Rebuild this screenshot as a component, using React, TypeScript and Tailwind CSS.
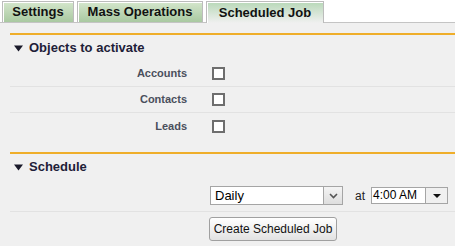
import { useState } from 'react'

const tabs = [
  { label: 'Settings', w: 'w-[72px]' },
  { label: 'Mass Operations', w: 'w-[126px]' },
  { label: 'Scheduled Job', w: 'w-[118px]' },
]
const objects = ['Accounts', 'Contacts', 'Leads']

function Caret() {
  return (
    <svg width="9" height="7" viewBox="0 0 9 7" className="shrink-0">
      <path d="M0 0.5 H9 L4.5 6.5 Z" fill="#1a1a2a" />
    </svg>
  )
}

function SectionHeader({ title }: { title: string }) {
  return (
    <div className="ml-[10px] border-t-2 border-[#efae2a]">
      <div className="flex items-center gap-[6px] pl-[4px] h-[26px] text-[13px] font-bold text-[#1e2038]">
        <Caret />
        <span>{title}</span>
      </div>
    </div>
  )
}

export default function App() {
  const [checked, setChecked] = useState<Record<string, boolean>>({})

  return (
    <div className="w-[455px] h-[246px] bg-white font-['Liberation_Sans',Arial,sans-serif] overflow-hidden">
      {/* tab strip */}
      <div className="flex items-end h-[23px] border-b border-[#c4c4c4] pl-[2px] gap-[3px]">
        {tabs.map((t, i) => {
          const active = i === 2
          return (
            <div
              key={t.label}
              className={`${t.w} h-[21px] flex items-center justify-center text-[13px] font-bold text-[#111] border border-[#bcbcbc] border-b-0 shadow-[inset_1px_1px_0_#ffffff] ${
                active
                  ? 'bg-gradient-to-b from-[#b8d8b8] to-[#f0f0f0] h-[22px] -mb-px'
                  : 'bg-gradient-to-b from-[#d4e6cc] to-[#a9c9a1]'
              }`}
            >
              {t.label}
            </div>
          )
        })}
      </div>

      <div className="bg-[#f0f0f0] h-[223px] pt-[10px]">
        <SectionHeader title="Objects to activate" />
        <div className="ml-[10px]">
          {objects.map((o, i) => (
            <div
              key={o}
              className={`flex items-center h-[26px] ${i < objects.length - 1 ? 'border-b border-[#e2e2e2]' : ''}`}
            >
              <div className="w-[177px] text-right text-[11px] font-bold text-[#4a4f5c]">{o}</div>
              <label className="ml-[25px] w-[13px] h-[13px] border-2 border-[#6e6e6e] bg-white cursor-pointer">
                <input
                  type="checkbox"
                  className="hidden"
                  checked={!!checked[o]}
                  onChange={() => setChecked({ ...checked, [o]: !checked[o] })}
                />
              </label>
            </div>
          ))}
        </div>

        <div className="h-[13px]" />
        <SectionHeader title="Schedule" />
        <div className="ml-[10px]">
          <div className="flex items-center h-[32px] border-b border-[#e2e2e2] pl-[200px]">
            <div className="flex w-[133px] h-[19px] border border-[#a5a5a5] bg-white">
              <span className="flex-1 text-[13px] leading-[17px] pl-[4px] text-black">Daily</span>
              <span className="w-[19px] h-full flex items-center justify-center bg-gradient-to-b from-[#f4f4f4] to-[#dedede] border-l border-[#a5a5a5]">
                <svg width="9" height="6" viewBox="0 0 9 6">
                  <path d="M1 1 L4.5 4.5 L8 1" fill="none" stroke="#555" strokeWidth="1.6" />
                </svg>
              </span>
            </div>
            <span className="ml-[12px] text-[12px] text-[#222]">at</span>
            <div className="ml-[6px] flex w-[77px] h-[17px] border border-[#a5a5a5] bg-white">
              <span className="flex-1 text-[12px] leading-[15px] pl-[1px] text-black">4:00 AM</span>
              <span className="w-[22px] h-full flex items-center justify-center bg-[#f0f0f0] border-l border-[#a5a5a5]">
                <svg width="8" height="4" viewBox="0 0 8 4">
                  <path d="M0 0 H8 L4 4 Z" fill="#111" />
                </svg>
              </span>
            </div>
          </div>
          <div className="pl-[199px] pt-[4px]">
            <button className="h-[24px] w-[128px] rounded-[3px] border border-[#a0a0a0] bg-gradient-to-b from-[#ffffff] to-[#e2e2e2] text-[12px] text-[#111]">
              Create Scheduled Job
            </button>
          </div>
        </div>
      </div>
    </div>
  )
}
